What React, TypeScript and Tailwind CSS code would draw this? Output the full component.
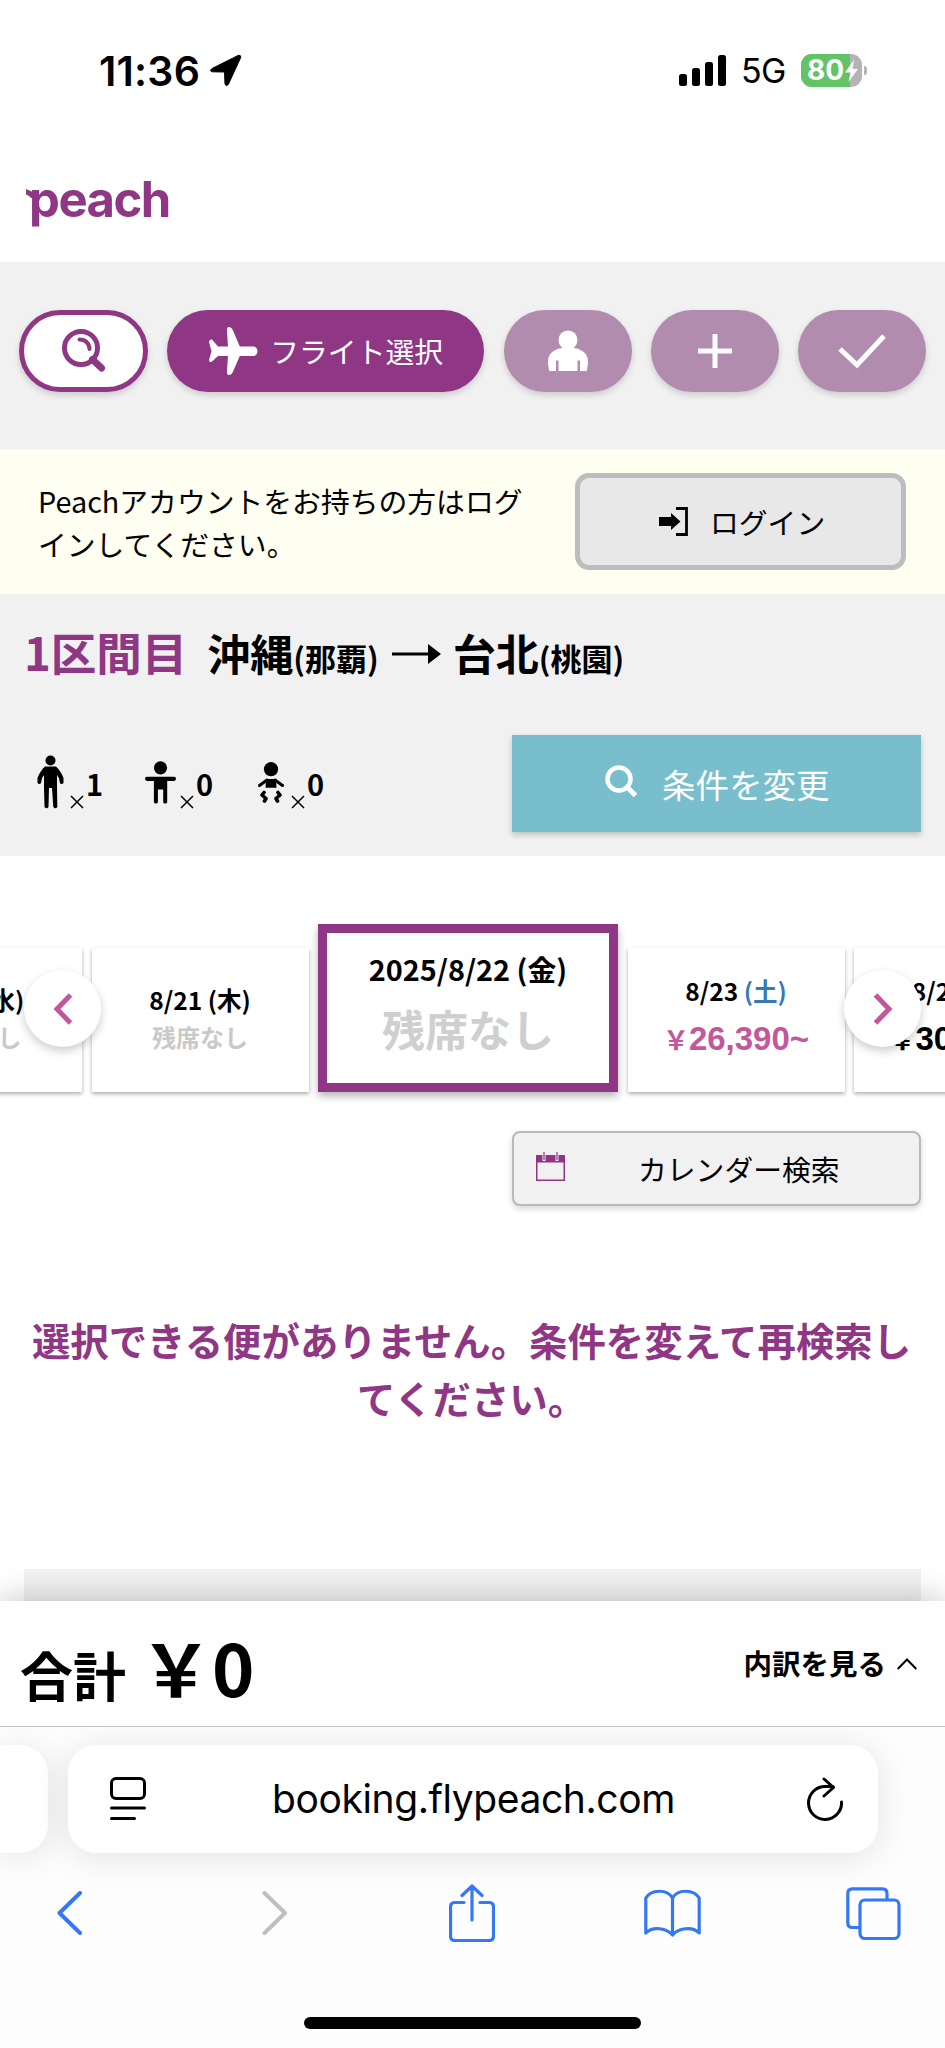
import type { ReactNode } from 'react';

const FULLWIDTH_YEN = '\uFFE5';

/* ---------- Icons ---------- */

function SearchGlassIcon() {
  return (
    <svg className="w-[46px] h-[46px]" viewBox="0 0 46 46" fill="none">
      <circle cx="20" cy="20" r="16.5" stroke="#8f3685" strokeWidth="5" />
      <path d="M18.5 11.500c6 0 10 4 10 9.500" stroke="#8f3685" strokeWidth="4" strokeLinecap="round" />
      <path d="M31.500 31.500l9 8.500" stroke="#8f3685" strokeWidth="7" strokeLinecap="round" />
    </svg>
  );
}

function PlaneIcon() {
  return (
    <svg className="w-[52px] h-[50px]" viewBox="0 0 52 50" fill="#fff">
      <path d="M10 20.500h36a5 5 0 0 1 0 9.500H10l-6 5.500q-3 1.500-3-1.500L3.500 25.200 1 16q0-3 3-2.500z" />
      <path d="M20 21L19 5q-.5-4 2-4t4 3.500L32 21zM20 29.500L19 45q-.5 4 2 4t4-3.500L32 29.500z" />
    </svg>
  );
}

function PersonIcon() {
  return (
    <svg className="w-[42px] h-[42px]" viewBox="0 0 42 42" fill="#fff">
      <circle cx="21" cy="10" r="9.500" />
      <path d="M15 17h12v1c8 1 14 6 14 13 0 5-1 7-1 10h-7V30.500h-2.500V41h-19V30.500H9V41H2c0-3-1-5-1-10 0-7 6-12 14-13z" />
    </svg>
  );
}

function PlusIcon() {
  return (
    <svg className="w-[34px] h-[34px]" viewBox="0 0 34 34">
      <path d="M17 0v34M0 17h34" stroke="#fff" strokeWidth="5" />
    </svg>
  );
}

function CheckIcon() {
  return (
    <svg className="w-[48px] h-[36px]" viewBox="0 0 48 36" fill="none">
      <path d="M2 16l17 16L46 3" stroke="#fff" strokeWidth="5" />
    </svg>
  );
}

function LoginIcon() {
  return (
    <svg className="w-[29px] h-[29px]" viewBox="0 0 29 29">
      <path d="M0 10h12V6l9.500 8.500L12 23v-4H0z" />
      <path d="M17 1.500h10.500v26H17" fill="none" stroke="#000" strokeWidth="2.800" />
    </svg>
  );
}

function AdultIcon() {
  return (
    <svg className="w-[27px] h-[54px]" viewBox="0 0 27 54">
      <circle cx="13.500" cy="5.500" r="5" />
      <path d="M8 11.500h11c3 2.500 6 7.500 7.500 11.500v5q-1.500 2-3.500.3l-1-5L20 20v13l.3 19q-2 2.500-4 0L15 33h-3l-.5 19q-2 2.500-4 0L7 33V20l-2 3.300-1 5q-2 1.700-3.500-.3v-5C2 19 5 14 8 11.500z" />
    </svg>
  );
}

function ChildIcon() {
  return (
    <svg className="w-[31px] h-[43px]" viewBox="0 0 31 43">
      <circle cx="15.500" cy="6.800" r="6.600" />
      <path d="M2 15.700h27q2 0 2 2.100t-2 2.100h-6.800V41q0 1.500-2 1.500t-2-1.500V28.500h-5.300V41q0 1.500-2 1.500t-2-1.500V19.900H2q-2 0-2-2.100t2-2.100z" />
    </svg>
  );
}

function InfantIcon() {
  return (
    <svg className="w-[26px] h-[41px]" viewBox="0 0 26 41" fill="none" stroke="#000" strokeLinecap="round" strokeLinejoin="round">
      <circle cx="13" cy="7.200" r="7.100" fill="#000" stroke="none" />
      <path d="M8 17h10l.5 8.800h-11z" fill="#000" stroke="none" />
      <path d="M9 18l-7.500 5.500M17 18l7.500 5.500" strokeWidth="3" />
      <path d="M6 30.500l-2 2.500 4 3.500-1.500 2.500M20 30.500l2 2.500-4 3.500 1.500 2.500" strokeWidth="3.600" />
    </svg>
  );
}

function TimesMark() {
  return (
    <svg className="w-[14px] h-[14px]" viewBox="0 0 14 14">
      <path d="M1 1l12 12M13 1L1 13" stroke="#000" strokeWidth="1.500" />
    </svg>
  );
}

/* ---------- Sections ---------- */

function StatusBar() {
  return (
    <div className="h-[140px] flex items-start justify-between pl-[99px] pr-[78px] pt-[50px] font-['Inter',sans-serif]">
      <div className="flex items-center h-10">
        <span className="text-[41px] leading-10 font-semibold tracking-[0.200px] pt-[1px]">11:36</span>
        <svg className="w-[32px] h-[32px] ml-[10px]" viewBox="0 0 32 32">
          <path d="M28.500 1.300L2 14.500q-3 2.500.5 3.300l12 .2.500 12q1 3 3.300.5L30.700 3.500q.5-2.500-2.200-2.200z" stroke="#000" strokeLinejoin="round" />
        </svg>
      </div>
      <div className="flex items-center h-10">
        <div className="flex items-end gap-[5px] h-[31px]">
          <div className="w-2 h-3 rounded-[2.500px] bg-black" />
          <div className="w-2 h-[18px] rounded-[2.500px] bg-black" />
          <div className="w-2 h-[24px] rounded-[2.500px] bg-black" />
          <div className="w-2 h-[31px] rounded-[2.500px] bg-black" />
        </div>
        <span className="ml-[15px] pt-[1px] text-[34px] leading-10 tracking-[-0.500px]">5G</span>
        <div className="ml-[15px] w-[61px] h-[33px] rounded-[11px] overflow-hidden flex bg-[#b4b4b6]">
          <div className="w-[49px] h-full bg-[#62c466] flex items-center pl-[6px]">
            <span className="text-[28px] font-bold text-white">80</span>
          </div>
          <svg className="w-[13px] h-[22px] mt-[6px] -ml-[5px]" viewBox="0 0 13 22" fill="#fff">
            <path d="M9 0L0 12.500h5.500L3.500 22 13 9H7.500z" />
          </svg>
        </div>
        <div className="ml-[2px] w-[3px] h-[9px] rounded-r-full bg-[#b4b4b6]" />
      </div>
    </div>
  );
}

function SiteHeader() {
  return (
    <header className="h-[122px] pl-[26px] pt-[28px] flex items-start">
      {/* leaf at the head of the wordmark */}
      <svg className="w-[9px] h-[9px] mt-[21px] -mr-[6px]" viewBox="0 0 9 9" fill="#8f3685">
        <path d="M0 0l9 4v4L5 9Q3 6 0 5.500z" />
      </svg>
      <span className="text-[49px] leading-[64px] font-bold tracking-[-1.500px] text-[#8f3685] font-['Inter',sans-serif]">
        peach
      </span>
    </header>
  );
}

function Pill({ children, active }: { children: ReactNode; active?: boolean }) {
  return (
    <div
      className={
        active
          ? 'w-[317px] h-[82px] rounded-full bg-[#8f3685] shadow-[0_3px_6px_rgba(0,0,0,0.16)] flex items-center pl-[41px]'
          : 'w-[128px] h-[82px] rounded-full bg-[#b18cae] shadow-[0_3px_6px_rgba(0,0,0,0.16)] flex items-center justify-center'
      }
    >
      {children}
    </div>
  );
}

function StepNav() {
  return (
    <nav className="h-[187px] bg-[#f1f1f1] px-[19px] pt-[48px] flex justify-between">
      <div className="w-[129px] h-[82px] rounded-full bg-white border-5 border-[#8f3685] shadow-[0_3px_6px_rgba(0,0,0,0.16)] flex items-center justify-center">
        <SearchGlassIcon />
      </div>
      <Pill active>
        <PlaneIcon />
        <span className="ml-[10px] text-[28.800px] text-white whitespace-nowrap">フライト選択</span>
      </Pill>
      <Pill>
        <PersonIcon />
      </Pill>
      <Pill>
        <PlusIcon />
      </Pill>
      <Pill>
        <CheckIcon />
      </Pill>
    </nav>
  );
}

function LoginBanner() {
  return (
    <section className="h-[145px] bg-[#fefff0] flex items-center justify-between pl-[38px] pr-[39px]">
      <p className="w-[490px] text-[28.800px] leading-[43px]">
        Peachアカウントをお持ちの方はログ
        <br />
        インしてください。
      </p>
      <button className="w-[331px] h-[97px] rounded-[14px] border-5 border-[#bdbdbd] bg-[#e8e8e8] flex items-center pl-[79px] gap-[22px] text-[28.800px]">
        <LoginIcon />
        ログイン
      </button>
    </section>
  );
}

const PASSENGERS = [
  { icon: <AdultIcon />, count: 1, box: 'w-[108px]', gap: 'ml-[6px]' },
  { icon: <ChildIcon />, count: 0, box: 'w-[113px]', gap: 'ml-[4px]' },
  { icon: <InfantIcon />, count: 0, box: 'w-[108px]', gap: 'ml-[7px]' },
];

function RouteSummary() {
  return (
    <section className="h-[262px] bg-[#f1f1f1] pl-[24px] pr-[24px]">
      <h1 className="h-[141px] pt-[23px] flex items-baseline leading-[68px] font-bold whitespace-nowrap">
        <span className="text-[45.500px] text-[#8f3685]">1区間目</span>
        <span className="ml-[20px] text-[43px]">沖縄</span>
        <span className="text-[31px]">(那覇)</span>
        <svg className="w-[49px] h-[20px] ml-[13px] self-start mt-[27px]" viewBox="0 0 49 20">
          <path d="M0 8.500h36V0l13 10-13 10v-8.500H0z" />
        </svg>
        <span className="ml-[12px] text-[43px]">台北</span>
        <span className="text-[31px]">(桃園)</span>
      </h1>
      <div className="flex justify-between">
        <div className="flex h-[97px] pl-[13px] pt-[20px]">
          {PASSENGERS.map(({ icon, count, box, gap }, i) => (
            <div key={i} className={`flex h-[54px] ${box}`}>
              <div className="h-[54px] flex items-center">{icon}</div>
              <div className={`self-end ${gap}`}>
                <TimesMark />
              </div>
              <span className="ml-[2px] mt-[7px] text-[29px] leading-[43px] font-bold">{count}</span>
            </div>
          ))}
        </div>
        <button className="w-[409px] h-[97px] bg-[#78becd] text-white shadow-[0_3px_6px_rgba(0,0,0,0.2)] flex items-center pl-[93px]">
          <svg className="w-[33px] h-[33px] -mt-[4px]" viewBox="0 0 33 33" fill="none" stroke="#fff" strokeWidth="4.500">
            <circle cx="14" cy="14" r="11.500" />
            <path d="M22 22l8.500 8.500" strokeWidth="5" />
          </svg>
          <span className="ml-[24px] pt-[1px] text-[33.500px]">条件を変更</span>
        </button>
      </div>
    </section>
  );
}

function DayCard({ date, day, dayClass, children }: { date: string; day: string; dayClass?: string; children: ReactNode }) {
  return (
    <div className="w-[217px] h-[144px] shrink-0 bg-white shadow-[0_2px_4px_rgba(0,0,0,0.32)] flex flex-col items-center justify-center whitespace-nowrap">
      <div className="mt-[2px] text-[24.500px] leading-[36px] font-bold">
        {date} <span className={dayClass}>({day})</span>
      </div>
      {children}
    </div>
  );
}

function SoldOut() {
  return <div className="h-[42px] pt-[4px] text-[24px] leading-[30px] font-bold text-[#c9c9c9]">残席なし</div>;
}

function Fare({ amount, className }: { amount: string; className?: string }) {
  return (
    <div className={`flex items-baseline h-[60px] pt-[2px] text-[33px] leading-[56px] font-bold font-['Liberation_Sans',sans-serif] ${className ?? ''}`}>
      <span className="text-[26px] font-['Noto_Sans_CJK_JP',sans-serif]">{FULLWIDTH_YEN}</span>
      {amount}~
    </div>
  );
}

function SlideButton({ dir }: { dir: 'prev' | 'next' }) {
  return (
    <button
      className={`absolute top-[46px] w-[77px] h-[77px] rounded-full bg-white shadow-[0_4px_10px_rgba(0,0,0,0.2)] flex items-center justify-center ${
        dir === 'prev' ? 'left-[24px]' : 'right-[24px]'
      }`}
    >
      <svg className="w-[20px] h-[32px]" viewBox="0 0 20 32" fill="none" stroke="#c2589b" strokeWidth="5">
        <path d={dir === 'prev' ? 'M17.500 2L4 16l13.500 14' : 'M2.500 2L16 16 2.500 30'} />
      </svg>
    </button>
  );
}

function DateCarousel() {
  return (
    <section className="relative h-[168px] mt-[68px]">
      <div className="h-[210px] -mb-[42px] w-full overflow-hidden">
        <div className="flex items-end gap-[9.500px] h-[168px] -ml-[135px] w-[1230px]">
          <DayCard date="8/20" day="水">
            <SoldOut />
          </DayCard>
          <DayCard date="8/21" day="木">
            <SoldOut />
          </DayCard>
          <div className="w-[300px] h-[168px] shrink-0 border-[9px] border-[#8f3685] bg-white shadow-[0_4px_8px_rgba(0,0,0,0.3)] flex flex-col items-center">
            <div className="mt-[14px] text-[28.800px] leading-[43px] font-bold">2025/8/22 (金)</div>
            <div className="mt-[8px] text-[43px] leading-[60px] font-bold text-[#cfcfcf]">残席なし</div>
          </div>
          <DayCard date="8/23" day="土" dayClass="text-[#337ab7]">
            <Fare amount="26,390" className="text-[#c2589b]" />
          </DayCard>
          <DayCard date="8/24" day="日" dayClass="text-[#c2589b]">
            <Fare amount="30,390" />
          </DayCard>
        </div>
      </div>
      <SlideButton dir="prev" />
      <SlideButton dir="next" />
    </section>
  );
}

function CalendarButton() {
  return (
    <button className="self-end mr-[24px] mt-[39px] w-[409px] h-[75px] shrink-0 rounded-lg border-2 border-[#b9b9b9] bg-[#f1f1f1] shadow-[0_3px_6px_rgba(0,0,0,0.16)] flex items-center pl-[22px]">
      <svg className="w-[29px] h-[29px] -mt-[4px]" viewBox="0 0 29 29">
        <path d="M0 3h29v26H0z" fill="#8f3685" />
        <path d="M1.500 10.500h26v17h-26z" fill="#f1f1f1" />
        <path d="M6.500 0h3v9h-3zM19.500 0h3v9h-3z" fill="#f1f1f1" />
        <path d="M8 0v8M21 0v8" stroke="#8f3685" strokeWidth="1.200" />
      </svg>
      <span className="ml-[73px] text-[28.800px]">カレンダー検索</span>
    </button>
  );
}

function TotalBar() {
  return (
    <section className="relative h-[125px] bg-[#fefefe] shadow-[0_-4px_28px_rgba(0,0,0,0.2)] flex justify-between pl-[20px] pr-[28px] font-bold">
      <div className="flex items-baseline leading-[125px] pt-[2px]">
        <span className="text-[53px]">合計</span>
        <span className="ml-[14px] text-[72px]">{FULLWIDTH_YEN}0</span>
      </div>
      <div className="h-[125px] flex items-center text-[28.500px]">
        内訳を見る
        <svg className="w-[20px] h-[12px] ml-[11px]" viewBox="0 0 20 12" fill="none" stroke="#000" strokeWidth="2">
          <path d="M.7 11L10 1.500 19.300 11" />
        </svg>
      </div>
    </section>
  );
}

function BrowserBar() {
  return (
    <footer className="relative h-[322px] bg-[#fdfdfe] border-t border-[#c6c6c9] overflow-hidden">
      <div className="flex gap-[20px] pt-[18px]">
        <div className="w-[48px] h-[108px] rounded-r-[28px] bg-white shadow-[0_4px_36px_rgba(0,0,0,0.11)]" />
        <div className="w-[810px] h-[108px] rounded-[28px] bg-white shadow-[0_4px_36px_rgba(0,0,0,0.11)] flex items-center justify-between pl-[42px] pr-[34px]">
          <svg className="w-[36px] h-[44px]" viewBox="0 0 36 44" fill="none" stroke="#000" strokeWidth="3" strokeLinecap="round">
            <rect x="1.500" y="1.500" width="33" height="20" rx="4.500" />
            <path d="M1.500 31h33M1.500 41.500h23" />
          </svg>
          <span className="text-[39px] tracking-[-0.400px] font-['Inter',sans-serif] pt-[1px] pr-[5px]">booking.flypeach.com</span>
          <svg className="w-[38px] h-[44px]" viewBox="0 0 38 44" fill="none" stroke="#000" strokeWidth="3" strokeLinecap="round" strokeLinejoin="round">
            <path d="M35.500 25a16.500 16.500 0 1 1-16.500-15.500h8" />
            <path d="M18 2l9.500 8.500L18 19" />
          </svg>
        </div>
      </div>
      <div className="flex items-center h-[60px] mt-[30px] pl-[57px]">
        <svg className="w-[26px] h-[44px]" viewBox="0 0 26 44" fill="none" stroke="#3478f6" strokeWidth="4" strokeLinecap="round" strokeLinejoin="round">
          <path d="M23 2L2.500 22 23 42" />
        </svg>
        <svg className="w-[26px] h-[44px] ml-[179px]" viewBox="0 0 26 44" fill="none" stroke="#bfbfc1" strokeWidth="4" strokeLinecap="round" strokeLinejoin="round">
          <path d="M2.500 2L23 22 2.500 42" />
        </svg>
        <svg className="w-[46px] h-[58px] ml-[161px]" viewBox="0 0 46 58" fill="none" stroke="#3478f6" strokeWidth="3.200" strokeLinecap="round" strokeLinejoin="round">
          <path d="M15 18.500H6q-4.500 0-4.500 4.500v29q0 4.500 4.500 4.500h34q4.500 0 4.500-4.500V23q0-4.500-4.500-4.500h-9" />
          <path d="M23 36V2M13 11.500L23 2l10 9.500" />
        </svg>
        <svg className="w-[57px] h-[48px] ml-[149px]" viewBox="0 0 57 48" fill="none" stroke="#3478f6" strokeWidth="3.200" strokeLinejoin="round">
          <path d="M28.500 46C23 39.500 9 36.500 1.800 44V9C7 .5 23-.5 28.500 9 34-.5 50 .5 55.200 9v35C48 36.500 34 39.500 28.500 46zM28.500 9v37" />
        </svg>
        <svg className="w-[55px] h-[53px] ml-[145px]" viewBox="0 0 55 53" fill="none" stroke="#3478f6" strokeWidth="3.200">
          <path d="M13 40.500H6.500Q1.800 40.500 1.800 36V6.500Q1.800 1.800 6.500 1.800h30q4.500 0 4.500 4.700V13" />
          <rect x="14" y="13" width="39" height="38.500" rx="5" />
        </svg>
      </div>
      <div className="mx-auto mt-[74px] w-[337px] h-[12px] rounded-full bg-black" />
    </footer>
  );
}

export default function App() {
  return (
    <div className="w-[945px] h-[2048px] flex flex-col overflow-hidden bg-white text-black font-['Noto_Sans_CJK_JP',sans-serif]" lang="ja">
      <StatusBar />
      <SiteHeader />
      <StepNav />
      <LoginBanner />
      <RouteSummary />
      <DateCarousel />
      <CalendarButton />
      <p className="mt-[104px] pl-[23px] pr-[25px] text-center text-[38.400px] leading-[58px] font-bold text-[#8f3685] whitespace-nowrap">
        選択できる便がありません。条件を変えて再検索し
        <br />
        てください。
      </p>
      <div className="mt-auto mx-[24px] h-[32px] bg-[#f1f1f1]" />
      <TotalBar />
      <BrowserBar />
    </div>
  );
}
